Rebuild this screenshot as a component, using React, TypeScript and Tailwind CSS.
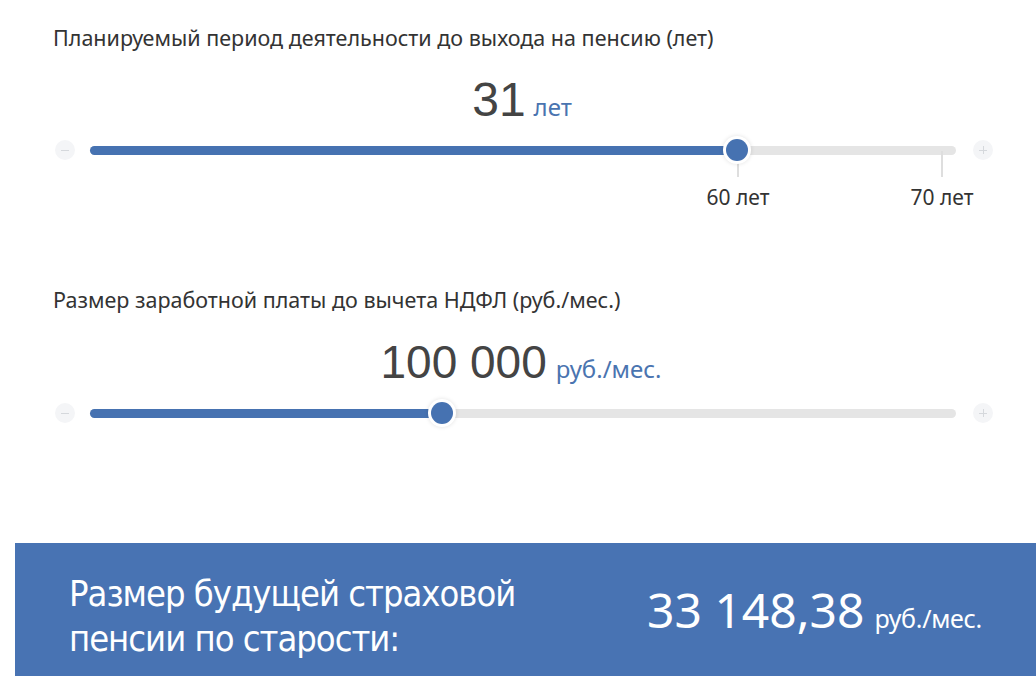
import React from "react";

function Minus() {
  return (
    <div className="w-[20px] h-[20px] rounded-full bg-[#f4f5f7] flex items-center justify-center">
      <div className="w-[8px] h-[1px] bg-[#d5d8dc]" />
    </div>
  );
}

function Plus() {
  return (
    <div className="w-[20px] h-[20px] rounded-full bg-[#f4f5f7] relative">
      <div className="absolute left-[6px] top-[9.5px] w-[8px] h-[1px] bg-[#d5d8dc]" />
      <div className="absolute left-[9.5px] top-[6px] w-[1px] h-[8px] bg-[#d5d8dc]" />
    </div>
  );
}

function Slider({ fillPx, children }: { fillPx: number; children?: React.ReactNode }) {
  return (
    <div className="flex items-center h-[26px] pl-[55px] gap-[15px]">
      <Minus />
      <div className="relative w-[866px] h-[9px] rounded-full bg-[#e5e5e5] mr-[2px]">
        <div className="absolute left-0 top-0 h-[9px] rounded-full bg-[#4672b1]" style={{ width: fillPx }} />
        {children}
        <div
          className="absolute top-1/2 -translate-y-1/2 -translate-x-1/2 w-[28px] h-[28px] rounded-full bg-white flex items-center justify-center shadow-[0_0_4px_rgba(0,0,0,0.12)]"
          style={{ left: fillPx }}
        >
          <div className="w-[22px] h-[22px] rounded-full bg-[#4672b1]" />
        </div>
      </div>
      <Plus />
    </div>
  );
}

export default function App() {
  return (
    <div className="w-[1036px] h-[676px] bg-white overflow-hidden flex flex-col font-['Noto_Sans',sans-serif]">
      <div className="pt-[24px] flex flex-col">
        <div className="pl-[53px] text-[21.5px] leading-[28px] text-[#333]">
          Планируемый период деятельности до выхода на пенсию (лет)
        </div>
        <div className="mt-[20px] h-[56px] flex items-baseline justify-center pl-[8px]">
          <span className="text-[48px] leading-[56px] text-[#444] font-['Liberation_Sans',sans-serif]">31</span>
          <span className="ml-[8px] text-[24px] text-[#4a74b0]">лет</span>
        </div>
        <div className="mt-[9px]">
          <Slider fillPx={647}>
            <div className="absolute left-[647px] top-[15px] w-[2px] h-[16px] bg-[#dedede]" />
            <div className="absolute left-[851px] top-[5px] w-[2px] h-[26px] bg-[#dedede]" />
            <div className="absolute left-[648px] top-[38px] -translate-x-1/2 text-[21px] leading-[26px] text-[#333] whitespace-nowrap">
              60 лет
            </div>
            <div className="absolute left-[852px] top-[38px] -translate-x-1/2 text-[21px] leading-[26px] text-[#333] whitespace-nowrap">
              70 лет
            </div>
          </Slider>
        </div>
        <div className="mt-[123px] pl-[53px] text-[21.5px] leading-[28px] text-[#333]">
          Размер заработной платы до вычета НДФЛ (руб./мес.)
        </div>
        <div className="mt-[20px] h-[56px] flex items-baseline justify-center pl-[6px]">
          <span className="text-[46px] leading-[56px] text-[#444] font-['Liberation_Sans',sans-serif]">100 000</span>
          <span className="ml-[9px] text-[24px] text-[#4a74b0]">руб./мес.</span>
        </div>
        <div className="mt-[10px]">
          <Slider fillPx={352} />
        </div>
      </div>
      <div className="mt-auto ml-[15px] h-[133px] flex items-center bg-[#4873b3] text-white">
        <div className="ml-[54px] mt-[12px] w-[520px] text-[36px] leading-[45px] tracking-[-1px] font-['DejaVu_Sans_Condensed',sans-serif]">
          Размер будущей страховой
          <br />
          пенсии по старости:
        </div>
        <div className="ml-[58px] flex items-baseline">
          <span className="text-[48px] leading-[56px]">33 148,38</span>
          <span className="ml-[10px] text-[25px] tracking-[-0.3px]">руб./мес.</span>
        </div>
      </div>
    </div>
  );
}
